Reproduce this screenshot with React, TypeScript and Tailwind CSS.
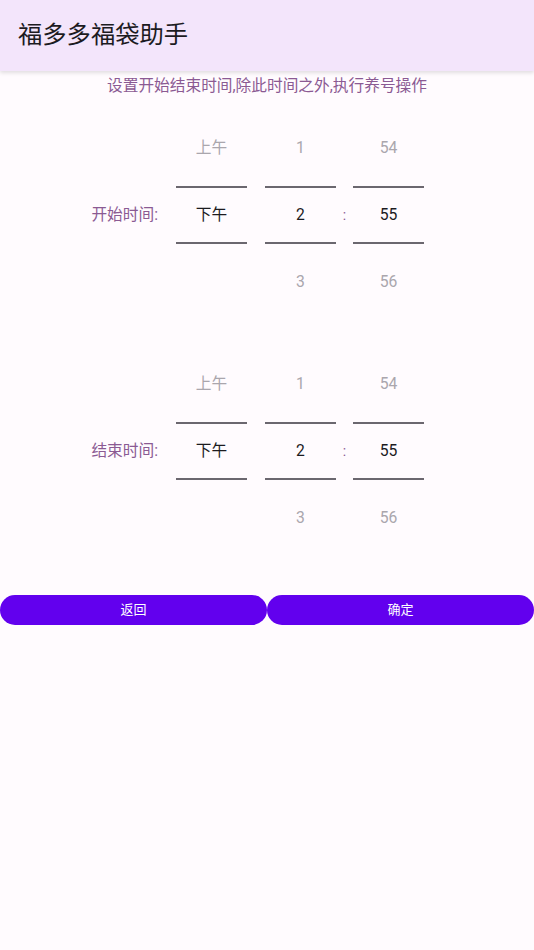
import React from "react";

type Col = { top: string; mid: string; bottom: string };

function Column({ col }: { col: Col }) {
  return (
    <div className="flex w-[71px] flex-col">
      <div className="flex h-[76px] items-center justify-center text-[15.7px] text-[#aaa6ad]">{col.top}</div>
      <div className="h-[2px] bg-[#6b676f]" />
      <div className="flex h-[54px] items-center justify-center text-[15.7px] text-[#1c1b1f]">{col.mid}</div>
      <div className="h-[2px] bg-[#6b676f]" />
      <div className="flex h-[76px] items-center justify-center text-[15.7px] text-[#aaa6ad]">{col.bottom}</div>
    </div>
  );
}

function TimePicker({ label }: { label: string }) {
  return (
    <div className="flex items-center pl-[88px]">
      <span className="w-[70px] text-right text-[15.7px] text-[#8b5a93]">{label}</span>
      <div className="ml-[18px]">
        <Column col={{ top: "上午", mid: "下午", bottom: "" }} />
      </div>
      <div className="ml-[18px]">
        <Column col={{ top: "1", mid: "2", bottom: "3" }} />
      </div>
      <span className="w-[17px] text-center text-[14px] text-[#8b5a93]">:</span>
      <Column col={{ top: "54", mid: "55", bottom: "56" }} />
    </div>
  );
}

export default function App() {
  return (
    <div
      className="min-h-screen bg-[#fffbfe]"
      style={{ fontFamily: 'Roboto, "Noto Sans CJK SC", sans-serif' }}
    >
      {/* TOP BAR */}
      <header className="relative z-10 flex h-[71px] items-center bg-[#f3e5fb] pl-[18px] shadow-[0_2px_4px_rgba(0,0,0,0.12)]">
        <h1 className="text-[24.3px] text-[#1c1b1f]">福多多福袋助手</h1>
      </header>

      <p className="pt-[5px] text-center text-[15.7px] leading-[20px] text-[#8b5a93]">
        设置开始结束时间,除此时间之外,执行养号操作
      </p>

      <div className="mt-[14px]">
        <TimePicker label="开始时间:" />
      </div>
      <div className="mt-[26px]">
        <TimePicker label="结束时间:" />
      </div>

      <div className="mt-[39px] flex">
        <button type="button" className="h-[30px] flex-1 rounded-full bg-[#6200ee] text-[13px] text-white">
          返回
        </button>
        <button type="button" className="h-[30px] flex-1 rounded-full bg-[#6200ee] text-[13px] text-white">
          确定
        </button>
      </div>
    </div>
  );
}
